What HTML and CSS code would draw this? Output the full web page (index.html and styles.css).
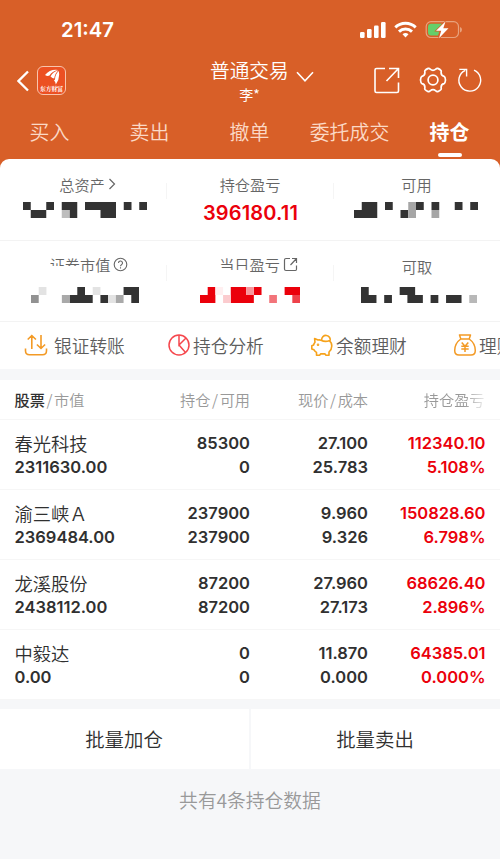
FILE: index.html
```html
<!DOCTYPE html>
<html lang="zh-CN">
<head>
<meta charset="utf-8">
<title>普通交易</title>
<link rel="stylesheet" href="styles.css">
</head>
<body>
<header class="top">
  <div class="status">
    <span class="clock">21:47</span>
    <svg class="status-icons" width="104" height="20" viewBox="0 0 104 20">
      <g fill="#fff">
        <rect x="1" y="12" width="4.6" height="6" rx="1.2"/><rect x="8" y="9" width="4.6" height="9" rx="1.2"/><rect x="15" y="5.5" width="4.6" height="12.500" rx="1.2"/><rect x="22" y="2" width="4.600" height="16" rx="1.2"/>
        <path d="M46.500 17.500l-3-3.200a4.400 4.400 0 0 1 6 0z"/>
      </g>
      <g fill="none" stroke="#fff" stroke-width="2.900"><path d="M36.300 7.400a14.600 14.600 0 0 1 20.400 0"/><path d="M40 11.600a9.300 9.300 0 0 1 13 0"/></g>
      <rect x="67.200" y="1.700" width="32.300" height="15.800" rx="4.800" fill="none" stroke="#e8a27d" stroke-width="1.200"/>
      <path d="M101 7v5.400q2-.6 2-2.700t-2-2.700z" fill="#e8a27d"/>
      <path d="M72 3.800h11l-4 11.600h-7q-3 0-3-3V6.800q0-3 3-3z" fill="#65cf6a"/>
      <path d="M86.500 1.500L77 10.700h5.200L80 18.200l9.500-10h-5.200z" fill="#fff" stroke="#d85f28" stroke-width="1.400" paint-order="stroke"/>
    </svg>
  </div>
  <div class="nav">
    <div class="nav-left">
      <svg width="12" height="22" viewBox="0 0 12 22"><path d="M11 1.500L1.500 11 11 20.500" fill="none" stroke="#fff" stroke-width="2.300"/></svg>
      <div class="logo">
        <svg width="16" height="16" viewBox="0 0 16 16" fill="#fff"><path d="M1 6Q6 0 14 1Q8 2 5.500 6.500Q3.500 7.500 1 6z"/><path d="M6.500 7.500Q9 2.500 14.400 1.500Q11 4 10.200 9.500Q8.500 9.500 6.500 7.500z"/><path d="M11 10.500Q11.200 5 14.700 2Q16.500 9 11.800 15.500Q11.500 12.500 10 11.500z"/></svg>
        <span>东方财富</span>
      </div>
    </div>
    <div class="account">
      <div class="account-title">普通交易<svg width="18" height="12" viewBox="0 0 18 12"><path d="M1 1.200l8 8.700 8-8.700" fill="none" stroke="#fff" stroke-width="1.600"/></svg></div>
      <div class="account-user">李*</div>
    </div>
    <div class="nav-right">
      <svg width="28" height="28" viewBox="0 0 28 28" fill="none" stroke="#fff" stroke-width="1.600"><path d="M12 2.500H3.500Q2 2.500 2 4v21q0 1.500 1.500 1.500H24q1.500 0 1.500-1.500v-8.500M16 2.500h9.500V12M25.500 2.500L13.500 15"/></svg>
      <svg width="28" height="28" viewBox="0 0 28 28" fill="none" stroke="#fff" stroke-width="1.700" stroke-linejoin="round"><path d="M9.200 2.400Q10.500 2.200 11.200 3.200Q14 5.500 16.800 3.200Q17.500 2.200 18.800 2.400Q21 3.300 22 4.500Q22.500 5.500 22.100 6.500Q22 9.600 25 10.300Q26.300 11 26.500 14Q26.300 17 25 17.700Q22 18.400 22.100 21.500Q22.500 22.500 22 23.500Q21 24.700 18.800 25.600Q17.500 25.800 16.800 24.800Q14 22.500 11.200 24.800Q10.500 25.800 9.200 25.600Q7 24.700 6 23.500Q5.500 22.500 5.900 21.500Q6 18.400 3 17.700Q1.700 17 1.500 14Q1.700 11 3 10.300Q6 9.600 5.900 6.500Q5.500 5.500 6 4.500Q7 3.300 9.200 2.400z"/><circle cx="14" cy="14" r="4.900"/></svg>
      <svg width="26" height="28" viewBox="0 0 26 28" fill="none" stroke="#fff" stroke-width="1.400"><path d="M17 4.200A10.900 10.900 0 1 1 8.300 4.300M2.300 3.400H9.600V10.500"/></svg>
    </div>
  </div>
  <nav class="tabs"><span>买入</span><span>卖出</span><span>撤单</span><span>委托成交</span><span class="on">持仓</span></nav>
</header>

<main>
  <section class="assets">
    <div class="asset">
      <div class="label total">总资产<svg width="8" height="12" viewBox="0 0 8 12"><path d="M1.500 1l5 5-5 5" fill="none" stroke="#666" stroke-width="1.200"/></svg></div>
      <svg class="mosaic m1" width="124" height="16" viewBox="0 0 16 2" preserveAspectRatio="none" fill="#333"><path d="M0 0h1v1H0zM3 0h1v1H3zM5 0h2v2H6V1H5zM8 0h4v2h-2V1H8zM13 0h1v1h-1zM15 0h1v1h-1zM1 1h2v1H1z"/><path fill="#bdbdbd" d="M5 1h1v1H5z"/></svg>
    </div>
    <div class="asset">
      <div class="label">持仓盈亏</div>
      <div class="profit">396180.11</div>
    </div>
    <div class="asset">
      <div class="label">可用</div>
      <svg class="mosaic m3" width="124" height="16" viewBox="0 0 16 2" preserveAspectRatio="none" fill="#333"><path d="M1 0h2v2H0V1h1zM4 0h1v1H4zM8 0h1v1H8zM10 0h1v1h-1zM13 0h1v1h-1zM15 0h1v1h-1zM6 1h1v1H6z"/><path fill="#a6a6a6" d="M7 0h1v2H7zM10 1h1v1h-1z"/></svg>
    </div>
    <div class="asset second">
      <div class="label"><span class="cut cut-a">证券</span>市值<svg width="15" height="15" viewBox="0 0 15 15" fill="none" stroke="#666" stroke-width="1.100"><circle cx="7.500" cy="7.500" r="6.300"/><path d="M5.500 6a2 2 0 1 1 3 1.700q-1 .6-1 1.500M7.500 10.300v1.200"/></svg></div>
      <svg class="mosaic m4" width="108" height="16" viewBox="0 0 14 2" preserveAspectRatio="none" fill="#333"><path d="M6 0h1v1h1v1H5V1h1zM12 0h2v2h-1V1h-1zM9 1h1v1H9z"/><path fill="#929292" d="M0 1h1v1H0z"/><path fill="#e3e3e3" d="M1 0h1v1H1zM8 0h1v1H8zM10 1h1v1h-1z"/><path fill="#a9a9a9" d="M4 1h1v1H4zM11 1h1v1h-1z"/></svg>
    </div>
    <div class="asset second">
      <div class="label today"><span class="cut cut-b">当日</span>盈亏<svg width="15" height="15" viewBox="0 0 15 15" fill="none" stroke="#666" stroke-width="1.200"><path d="M7 1.500H3Q1.500 1.500 1.500 3v9q0 1.500 1.500 1.500h9.500q1 0 1-1.500V8.500M9 1.500h4.500V6M13.500 1.500L7.500 8"/></svg></div>
      <svg class="mosaic m5" width="100" height="16" viewBox="0 0 13 2" preserveAspectRatio="none" fill="#eb000b"><path d="M1 0h1v2H0V1h1zM4 0h2v1h1v1H4zM7 0h1v1H7zM11 0h2v1h-2z"/><path fill="#ffeff0" d="M2 0h1v1H2z"/><path fill="#fbcbce" d="M3 1h1v1H3z"/><path fill="#f7979d" d="M6 0h1v1H6z"/><path fill="#f2747a" d="M9 1h1v1H9z"/><path fill="#ee424b" d="M12 1h1v1h-1z"/></svg>
    </div>
    <div class="asset second last">
      <div class="label">可取</div>
      <svg class="mosaic m6" width="116" height="16" viewBox="0 0 15 2" preserveAspectRatio="none" fill="#333"><path d="M0 0h1v1h1v1H0zM3 1h1v1H3zM5 0h2v1h1v1H6V1H5zM9 1h1v1H9zM11 1h2v1h-2z"/><path fill="#b8b8b8" d="M14 1h1v1h-1z"/></svg>
    </div>
  </section>

  <section class="actions">
    <div class="action a1"><svg width="24" height="24" viewBox="0 0 24 24" fill="none" stroke="#f39a25" stroke-width="1.600"><path d="M1.500 15.500v2.300q0 4 4 4h13q4 0 4-4v-2.300M7.800 16V2.500M3.700 6.500l4.100-4 4.100 4M17 2v13.500M12.900 11.500l4.100 4 4.100-4"/></svg>银证转账</div>
    <div class="action a2"><svg width="24" height="24" viewBox="0 0 24 24" fill="none" stroke="#f5474d" stroke-width="1.500"><circle cx="12" cy="12" r="10"/><path d="M12 2v10l7-7M12 12l6.500 7.500"/></svg>持仓分析</div>
    <div class="action a3"><svg width="24" height="24" viewBox="0 0 24 24" fill="none" stroke="#f6a21b" stroke-width="1.600" stroke-linejoin="round"><path d="M11 7.200Q9.500 6.600 8 7L4.600 5.600 5 9.300Q3.900 10.600 3.600 12L1.800 12.800V16L4 16.800Q4.800 18.300 6.500 19.400V22.200H9.600L10.600 20.900H15L16 22.200H19V19Q21.800 16.500 21.800 13Q21.800 9.500 19.200 7.700Q15 9.200 11 7.200zM11.700 7.200A4.300 4.300 0 1 1 20 8.200"/><circle cx="8" cy="11.800" r=".5"/></svg>余额理财</div>
    <div class="action a4"><svg width="24" height="24" viewBox="0 0 24 24" fill="none" stroke="#f39a25" stroke-width="1.500" stroke-linejoin="round"><path d="M7.800 6L6.500 2H17.500l-1.300 4zM7.800 6C3.500 9 1.700 13 1.700 17.500Q1.700 22 6 22h12q4.300 0 4.300-4.500C22.300 13 20.500 9 16.200 6M8.700 9.500l3.300 3.700 3.300-3.700M12 13.200V19M8.300 13.300h7.400M8.300 16h7.400"/></svg>理财</div>
  </section>

  <section class="holdings">
    <div class="row head"><span class="first"><b>股票</b><s>/</s>市值</span><span>持仓<s>/</s>可用</span><span>现价<s>/</s>成本</span><span class="fade">持仓盈亏</span></div>
    <div class="row"><div class="first"><i>春光科技</i>2311630.00</div><div>85300<br>0</div><div>27.100<br>25.783</div><div class="red">112340.10<br>5.108%</div></div>
    <div class="row"><div class="first"><i>渝三峡Ａ</i>2369484.00</div><div>237900<br>237900</div><div>9.960<br>9.326</div><div class="red">150828.60<br>6.798%</div></div>
    <div class="row"><div class="first"><i>龙溪股份</i>2438112.00</div><div>87200<br>87200</div><div>27.960<br>27.173</div><div class="red">68626.40<br>2.896%</div></div>
    <div class="row"><div class="first"><i>中毅达</i>0.00</div><div>0<br>0</div><div>11.870<br>0.000</div><div class="red">64385.01<br>0.000%</div></div>
  </section>

  <section class="batch"><div>批量加仓</div><div>批量卖出</div></section>
  <p class="summary">共有4条持仓数据</p>
</main>
</body>
</html>
```
FILE: styles.css
```css
* { box-sizing: border-box; }
body {
  margin: 0;
  width: 500px;
  height: 859px;
  overflow: hidden;
  background: #f6f7f9;
  color: #303030;
  font-family: Inter, "Noto Sans CJK SC", sans-serif;
}
svg { display: block; flex: none; }

.top { height: 172px; background: #d85f28; color: #fff; font-family: "Noto Sans CJK SC", sans-serif; font-weight: 350; }
.status { height: 54px; padding: 20px 37px 0 61px; display: flex; justify-content: space-between; }
.clock { font: 600 20.300px/20px Inter, sans-serif; }
.nav { height: 52px; padding: 0 18px 0 17px; display: grid; grid-template-columns: 193px 106px 1fr; }
.nav-left { display: flex; gap: 8px; padding-top: 12px; align-items: flex-start; }
.nav-left > svg { margin-top: 4px; }
.logo {
  width: 29px; height: 29px; border: 1px solid #f8c4ac; border-radius: 6px; background: #ec5022;
  display: flex; flex-direction: column; align-items: center; padding-top: 2px;
}
.logo span { font: 700 5.800px/8px "Noto Serif CJK SC", "Noto Sans CJK SC", serif; white-space: nowrap; }
.account { display: flex; flex-direction: column; }
.account-title { display: flex; gap: 7px; align-items: center; font-size: 19.700px; line-height: 32px; height: 32px; font-weight: 350; white-space: nowrap; }
.account-title svg { margin-top: 14px; }
.account-user { font-size: 14px; line-height: 16px; width: 79px; text-align: center; font-weight: 400; }
.nav-right { display: flex; justify-content: flex-end; align-items: flex-start; padding-top: 12px; }
.nav-right svg:nth-child(2) { margin: 0 10px 0 18px; }
.nav-right svg:nth-child(3) { margin-right: -1px; }
.tabs { height: 53px; display: grid; grid-template-columns: repeat(5, 100px); text-align: center; font-size: 19.900px; line-height: 52px; color: #fbd9c6; margin-left: -.5px; }
.tabs .on { color: #fff; font-weight: 700; display: flex; flex-direction: column; align-items: center; }
.tabs .on::after { content: ""; width: 24px; height: 3.500px; border-radius: 2px; background: #fff; margin-top: -5px; flex: none; }

main { margin-top: -13px; }
.assets { height: 163px; background: #fff; border-radius: 9px 9px 0 0; display: grid; grid-template-columns: 167px 167px 166px; grid-template-rows: 82px 81px; color: #666; font-family: "Noto Sans CJK SC", sans-serif; font-weight: 350; }
.asset { border-bottom: 1px solid #f3f3f3; padding-top: 13px; background: linear-gradient(#f5f5f5, #f5f5f5) right 24px / 1px 16px no-repeat; }
.asset:nth-child(3n) { background: none; }
.label { display: flex; align-items: center; justify-content: center; gap: 3px; font-size: 15.200px; line-height: 24px; height: 24px; white-space: nowrap; padding-right: 1px; }
.total { padding-left: 9px; }
.second .label { padding-left: 12px; gap: 0; }
.second .label svg { margin-left: 3px; }
.second .today { padding-left: 17px; }
.second.last .label { padding: 4px 0 0; }
.second { padding-top: 11px; }
.cut-a { clip-path: inset(0 0 10px 0); }
.cut-b { clip-path: inset(0 0 6px 0); }
.profit { font: 600 20px/34px Inter, sans-serif; letter-spacing: .15px; color: #eb000b; text-align: center; }
.mosaic { margin-top: 6px; }
.second .mosaic { margin-top: 11px; }
.m1 { margin-left: 23px; }
.m3 { margin-left: 20px; }
.m4 { margin-left: 31px; }
.m5 { margin-left: 33px; }
.m6 { margin-left: 27px; }

.actions { height: 47px; background: #fff; display: flex; padding-left: 24px; overflow: hidden; color: #5d5d5d; font: 350 17.700px/46px "Noto Sans CJK SC", sans-serif; }
.action { display: flex; align-items: center; white-space: nowrap; flex: none; width: 143px; height: 45px; }
.a1 svg { margin-right: 6px; }
.a2 svg, .a3 svg { margin: 0 2px 0 0; }
.a4 svg { margin-right: 2px; }

.holdings { margin-top: 11px; background: #fff; }
.row { height: 70px; padding: 11px 14.500px 0 15px; border-bottom: 1px solid #f6f6f6; display: grid; grid-template-columns: 135px 100px 118px 117.500px; text-align: right; font-weight: 600; font-size: 16.500px; line-height: 24.300px; }
.row i { display: block; height: 24px; font: 350 18.300px/24px "Noto Sans CJK SC", sans-serif; }
.first { text-align: left; margin-left: -.5px; }
.red { color: #eb000b; }
.row.head { height: 40px; padding-top: 0; font: 350 15.200px/38px "Noto Sans CJK SC", sans-serif; color: #999; }
.head s { text-decoration: none; padding: 0 1.600px; }
.head b { font-weight: 500; color: #303030; }
.head .fade { padding-right: 1px; -webkit-mask: linear-gradient(90deg, #000 96px, transparent 122px); mask: linear-gradient(90deg, #000 96px, transparent 122px); }

.batch { margin-top: 9px; height: 59px; display: grid; grid-template-columns: 249px 249px; gap: 2px; font: 350 19.400px/60px "Noto Sans CJK SC", sans-serif; text-align: center; }
.batch div { background: #fff; padding-right: 1px; }
.summary { margin: 0; text-align: center; color: #999; font: 350 18.800px/64px "Noto Sans CJK SC", sans-serif; }
```
